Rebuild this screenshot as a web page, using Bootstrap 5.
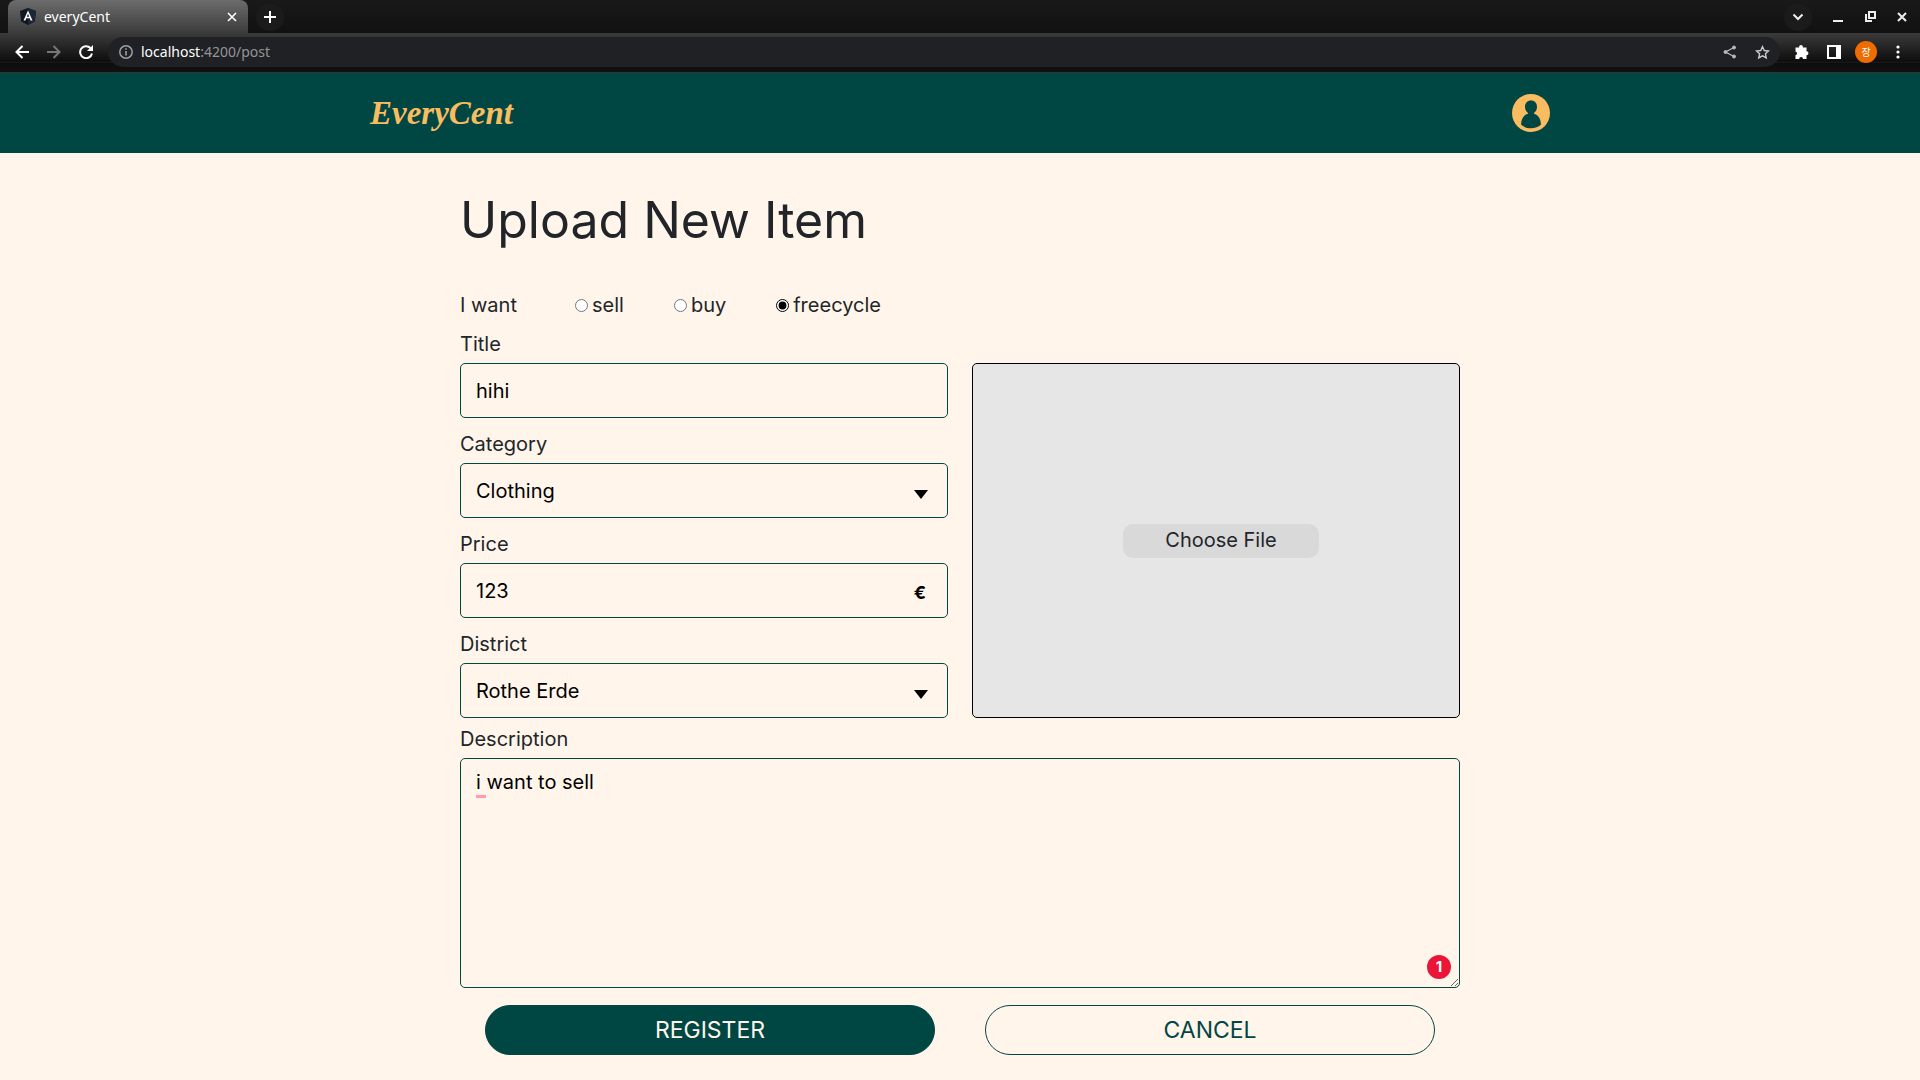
<!DOCTYPE html>
<html lang="en">
<head>
<meta charset="utf-8">
<meta name="viewport" content="width=device-width, initial-scale=1">
<title>everyCent</title>
<link href="https://cdn.jsdelivr.net/npm/bootstrap@5.3.0/dist/css/bootstrap.min.css" rel="stylesheet">
<style>
:root { --teal: #004643; --cream: #fff5eb; --gold: #f9bc60; }
body { background: var(--cream); color: #212529; font-family: Inter, sans-serif; font-size: 20px; line-height: 30px; }
svg { display: block; }

/* browser window */
.chrome { font-family: "Noto Sans", sans-serif; font-size: 14px; line-height: 20px; color: #fff; }
.chrome button { background: none; border: 0; padding: 0; color: inherit; display: grid; place-items: center; flex: none; }
.tabstrip { height: 33px; background: linear-gradient(#191919, #111); padding-left: 8px; }
.browser-tab { width: 240px; background: linear-gradient(#6c6c6c, #3b3b3b); border-radius: 8px 8px 0 0; padding: 0 7px 0 12px; }
.round-btn { width: 28px; height: 28px; }
.chrome .soft { background: #1b1b1b; border-radius: 50%; }
.toolbar { height: 40px; padding: 4px 8px 6px; background: linear-gradient(#3b3b3b, #0e0e0e 28px, #000 28px, #222 29px, #0c0c0c 30px, #111 39px, #333 39px); }
.address { background: #202124; border-radius: 15px; height: 30px; padding: 0 4px 0 11px; min-width: 0; }
.address-text { color: #939598; white-space: nowrap; outline: 0; }
.address-text span { color: #fff; }
.profile { width: 22px; height: 22px; border-radius: 50%; background: #ef6c00; font: 10px/22px "Noto Sans CJK KR", sans-serif; }

/* site */
.site-header { background: var(--teal); }
.site-inner { max-width: 1180px; min-height: 80px; }
.logo { font: italic bold 33px/40px "Liberation Serif", serif; color: var(--gold); text-decoration: none; }
.form-area { max-width: 1000px; padding: 37px 0 25px; }
h1 { font-size: 50px; line-height: 60px; font-weight: 400; margin: 0 0 40px; }
.choice input { width: 13px; height: 13px; margin: 0; accent-color: #000; }
.choice-lead { width: 115px; }
.choice-option { margin-right: 50px; }
.field-label { display: block; margin-bottom: 4px; }
.field, .notes { display: block; width: 100%; border: 1px solid var(--teal); border-radius: 5px; background: transparent; color: #000; padding: 0 15px; line-height: 30px; }
.field { height: 55px; appearance: none; }
.form-columns { padding-top: 9px; }
.fields { display: grid; gap: 11px; }
.suffix { position: absolute; right: 20px; bottom: 19px; pointer-events: none; }
.euro { right: 22px; bottom: 10px; color: #000; font-weight: 700; font-size: 18px; }
.upload { border: 1px solid #000; border-radius: 5px; background: #e6e6e6; margin-top: 34px; padding-left: 10px; }
.upload-btn { background: #d9d9d9; border-radius: 10px; width: 196px; height: 34px; line-height: 32px; text-align: center; cursor: pointer; }
.notes-label { padding-top: 6px; }
.notes { height: 230px; padding: 8px 15px; resize: both; }
.typo { position: absolute; left: 16px; top: 37px; width: 10px; height: 3px; background: #ff9bab; }
.issue-count { position: absolute; right: 9px; bottom: 9px; width: 24px; height: 24px; border-radius: 50%; background: #eb1537; color: #fff; font: bold 15px/24px Inter, sans-serif; border: 0; padding: 0; }
.actions { padding: 17px 25px 0; gap: 50px; }
.action { flex: 1; height: 50px; border: 1px solid var(--teal); border-radius: 25px; background: transparent; color: var(--teal); font-size: 23px; line-height: 30px; padding: 0; }
.action-main { background: var(--teal); color: var(--cream); }
</style>
</head>
<body>
<div class="chrome">
  <div class="tabstrip d-flex">
    <div class="browser-tab d-flex align-items-center">
      <svg width="16" height="17" viewBox="0 0 16 17"><path d="M8 0l8 3-1.200 10.500L8 17l-6.800-3.500L0 3z" fill="#101722"/><path d="M8 0l8 3-1.200 10.500L8 17z" fill="#1c2636"/><path d="M8 2.500L3.500 12.500h1.900l.9-2.300h3.400l.9 2.300h1.900zM8 5.800l1.200 2.900H6.800z" fill="#fff" fill-rule="evenodd"/></svg>
      <span class="ms-2 flex-grow-1">everyCent</span>
      <button class="px-1" aria-label="Close tab"><svg width="10" height="10" viewBox="0 0 10 10" stroke="#fff" stroke-width="1.600"><path d="M1 1l8 8M9 1L1 9"/></svg></button>
    </div>
    <div class="d-flex align-items-center flex-grow-1 pe-1">
      <button class="round-btn soft ms-2" aria-label="New tab"><svg width="12" height="12" viewBox="0 0 12 12" stroke="#fff" stroke-width="2"><path d="M6 0v12M0 6h12"/></svg></button>
      <button class="round-btn soft ms-auto me-2" aria-label="Search tabs"><svg width="12" height="8" viewBox="0 0 12 8" fill="none" stroke="#eee" stroke-width="2"><path d="M1.500 1.500L6 6l4.500-4.500"/></svg></button>
      <button class="round-btn ms-1" aria-label="Minimize"><svg width="12" height="12" viewBox="0 0 12 12"><path d="M1 9h10v2H1z" fill="#eee"/></svg></button>
      <button class="round-btn ms-1" aria-label="Restore"><svg width="11" height="11" viewBox="0 0 11 11" fill="none" stroke="#eee" stroke-width="2"><path d="M4 1h6v6H4zM1 3v7h6"/></svg></button>
      <button class="round-btn ms-1" aria-label="Close"><svg width="10" height="10" viewBox="0 0 10 10" stroke="#eee" stroke-width="2"><path d="M1 1l8 8M9 1L1 9"/></svg></button>
    </div>
  </div>
  <div class="toolbar d-flex align-items-center">
    <button class="round-btn" aria-label="Back"><svg width="14" height="14" viewBox="0 0 14 14" fill="none" stroke="#fff" stroke-width="2"><path d="M14 7H2M7.500 1L1.500 7l6 6"/></svg></button>
    <button class="round-btn ms-1" aria-label="Forward"><svg width="14" height="14" viewBox="0 0 14 14" fill="none" stroke="#777" stroke-width="2"><path d="M0 7h12M6.500 1l6 6-6 6"/></svg></button>
    <button class="round-btn ms-1 me-2" aria-label="Reload"><svg width="14" height="14" viewBox="0 0 14 14" fill="none" stroke="#fff" stroke-width="2"><path d="M11.500 3A6 6 0 1 0 13 8.500"/><path d="M14 0v6H8z" fill="#fff" stroke="none"/></svg></button>
    <div class="address d-flex align-items-center flex-grow-1">
      <svg width="14" height="14" viewBox="0 0 14 14" fill="none" stroke="#9aa0a6"><circle cx="7" cy="7" r="6.200" stroke-width="1.500"/><path d="M7 6v4.500M7 3.300v1.500" stroke-width="1.600"/></svg>
      <div class="address-text flex-grow-1 ms-2" contenteditable="true" role="textbox" aria-label="Address" spellcheck="false"><span>localhost</span>:4200/post</div>
      <button class="round-btn" aria-label="Share"><svg width="14" height="14" viewBox="0 0 14 14" stroke="#bbb" fill="#bbb"><path d="M11 2.500L2.500 7l8.500 4.500" fill="none" stroke-width="1.300"/><circle cx="11" cy="2.500" r="1.500"/><circle cx="2.500" cy="7" r="1.500"/><circle cx="11" cy="11.500" r="1.500"/></svg></button>
      <button class="round-btn ms-1" aria-label="Bookmark"><svg width="15" height="15" viewBox="0 0 16 16" fill="none" stroke="#ccc" stroke-width="1.500"><path d="M8 1.800l1.900 4.100 4.500.5-3.300 3 .9 4.400L8 11.600l-4 2.200.9-4.400-3.300-3 4.500-.5z"/></svg></button>
    </div>
    <button class="round-btn ms-2" aria-label="Extensions"><svg width="16" height="16" viewBox="0 0 16 16" fill="#fff"><path d="M1.500 3.500h3.700a1.900 1.900 0 1 1 3.600 0h3.700v3.700a2 2 0 1 1 0 4v3.800H9a1.900 1.900 0 0 0-3.800 0H1.500v-3.700a2 2 0 0 0 0-3.900z"/></svg></button>
    <button class="round-btn ms-1" aria-label="Side panel"><svg width="14" height="14" viewBox="0 0 14 14"><path d="M0 0h14v14H0zM2 2v10h7V2z" fill="#fff" fill-rule="evenodd"/></svg></button>
    <button class="round-btn ms-1" aria-label="Profile"><span class="profile">장</span></button>
    <button class="round-btn ms-1" aria-label="Menu"><svg width="4" height="14" viewBox="0 0 4 14" fill="#fff"><circle cx="2" cy="2" r="1.600"/><circle cx="2" cy="7" r="1.600"/><circle cx="2" cy="12" r="1.600"/></svg></button>
  </div>
</div>

<header class="site-header">
  <div class="site-inner mx-auto d-flex align-items-center justify-content-between">
    <a class="logo" href="#">EveryCent</a>
    <a href="#" aria-label="Account"><svg width="38" height="38" viewBox="0 0 38 38"><circle cx="19" cy="19" r="19" fill="#f9bc60"/><path d="M19 6.500c3.700 0 6 2.700 6 6.300 0 2.700-1.200 5-3 6.200v.8c4 1 6.600 4.500 7 10.700-2.500 2.500-6 3.700-10 3.700s-7.500-1.200-10-3.700c.4-6.200 3-9.700 7-10.700V19c-1.800-1.200-3-3.500-3-6.200 0-3.600 2.300-6.300 6-6.300z" fill="#004643"/></svg></a>
  </div>
</header>

<main class="form-area mx-auto">
  <h1>Upload New Item</h1>
  <form>
    <div class="choice d-flex align-items-center" role="radiogroup" aria-labelledby="want">
      <span class="choice-lead" id="want">I want</span>
      <label class="choice-option d-flex align-items-center gap-1"><input type="radio" name="kind">sell</label>
      <label class="choice-option d-flex align-items-center gap-1"><input type="radio" name="kind">buy</label>
      <label class="choice-option d-flex align-items-center gap-1"><input type="radio" name="kind" checked>freecycle</label>
    </div>
    <div class="form-columns row">
      <div class="col-6 fields">
        <div><label class="field-label" for="title">Title</label><input class="field" id="title" value="hihi"></div>
        <div class="position-relative"><label class="field-label" for="category">Category</label><select class="field" id="category"><option>Clothing</option></select><svg class="suffix" width="14" height="9" viewBox="0 0 14 9"><path d="M0 0h14L7 9z"/></svg></div>
        <div class="position-relative"><label class="field-label" for="price">Price</label><input class="field" id="price" value="123"><span class="suffix euro">€</span></div>
        <div class="position-relative"><label class="field-label" for="district">District</label><select class="field" id="district"><option>Rothe Erde</option></select><svg class="suffix" width="14" height="9" viewBox="0 0 14 9"><path d="M0 0h14L7 9z"/></svg></div>
      </div>
      <div class="col-6 d-flex">
        <div class="upload flex-grow-1 d-flex align-items-center justify-content-center">
          <input class="visually-hidden" type="file" id="photo">
          <label class="upload-btn" for="photo">Choose File</label>
        </div>
      </div>
    </div>
    <label class="field-label notes-label" for="description">Description</label>
    <div class="position-relative">
      <textarea class="notes" id="description" spellcheck="false">i want to sell</textarea>
      <span class="typo"></span>
      <button type="button" class="issue-count">1</button>
    </div>
    <div class="actions d-flex">
      <button type="submit" class="action action-main">REGISTER</button>
      <button type="button" class="action">CANCEL</button>
    </div>
  </form>
</main>
<script src="https://cdn.jsdelivr.net/npm/bootstrap@5.3.0/dist/js/bootstrap.bundle.min.js"></script>
</body>
</html>
